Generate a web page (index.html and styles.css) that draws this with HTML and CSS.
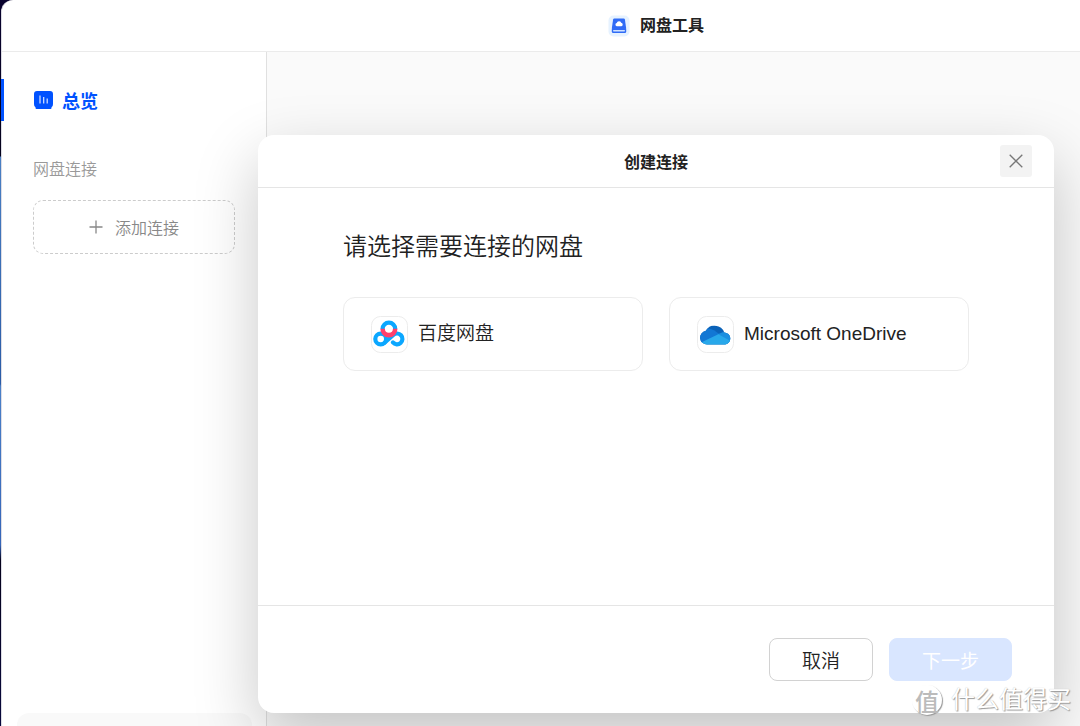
FILE: index.html
```html
<!DOCTYPE html>
<html lang="zh-CN">
<head>
<meta charset="utf-8">
<title>网盘工具</title>
<link rel="stylesheet" href="styles.css">
</head>
<body>
<div class="window">
  <header class="titlebar">
    <svg class="app-icon" width="22" height="22" viewBox="0 0 22 22" aria-hidden="true">
      <rect x="0.5" y="0.5" width="21" height="21" rx="5" fill="#e6f2ff"/>
      <path d="M6.300 3.500h9.400q1 0 1.200 1l1.300 9H3.800l1.300-9q.2-1 1.200-1z" fill="#2f6bf6"/>
      <rect x="3.800" y="12.500" width="14.400" height="5.500" rx="1.500" fill="#2f6bf6"/>
      <rect x="5" y="15" width="12" height="1.500" rx=".7" fill="#cfe2ff"/>
      <path d="M8.800 11.300a1.700 1.700 0 0 1-.1-3.300 2.400 2.400 0 0 1 4.500-.2 1.800 1.800 0 0 1 .2 3.500z" fill="#fff"/>
    </svg>
    <h1 class="app-name">网盘工具</h1>
  </header>
  <div class="workspace">
    <aside class="sidebar">
      <a class="nav-item" href="#overview">
        <svg width="19" height="18" viewBox="0 0 19 18" aria-hidden="true">
          <path d="M3 0h13q3 0 3 3v10q0 3-1.500 3.200V17q0 1-1 1h-14q-1 0-1-1v-.8Q0 16 0 13V3q0-3 3-3z" fill="#0052ff"/>
          <path d="M6 4.500v8M9.700 6v6.500M13.200 7.500v5" stroke="#dbe7ff" stroke-width="1.200"/>
        </svg>
        <span>总览</span>
      </a>
      <h2 class="group-title">网盘连接</h2>
      <button class="add-button" type="button">
        <svg width="14" height="14" viewBox="0 0 14 14" aria-hidden="true">
          <path d="M7 0.500v13M0.500 7h13" stroke="#888" stroke-width="1.300"/>
        </svg>
        <span>添加连接</span>
      </button>
      <div class="sidebar-panel"></div>
    </aside>
    <main class="content"></main>
  </div>
</div>

<div class="overlay">
  <section class="dialog" role="dialog" aria-labelledby="dialog-title">
    <header class="dialog-header">
      <h2 class="dialog-title" id="dialog-title">创建连接</h2>
      <button class="close-button" type="button" aria-label="关闭">
        <svg width="14" height="14" viewBox="0 0 14 14" aria-hidden="true">
          <path d="M0.700 0.700l12.600 12.600M13.300 0.700L0.700 13.300" stroke="#777" stroke-width="1.300"/>
        </svg>
      </button>
    </header>
    <div class="dialog-body">
      <h3 class="prompt">请选择需要连接的网盘</h3>
      <div class="options">
        <button class="option" type="button">
          <svg width="37" height="37" viewBox="0 0 37 37" aria-hidden="true">
            <rect x="0.500" y="0.500" width="36" height="36" rx="9" fill="#fff" stroke="#ececec"/>
            <g fill="none" stroke-width="4.200">
              <circle cx="9.700" cy="23" r="5.400" stroke="#0ba7ff"/>
              <path d="M13.500 26.800L22.300 19A5.400 5.400 0 1 1 21.900 26.400" stroke="#0ba7ff" stroke-linejoin="round" stroke-linecap="round"/>
              <path d="M11.600 13a6.300 6.300 0 0 1 12.600 0" stroke="#0ba7ff"/>
              <path d="M11.600 12.800a6.300 6.300 0 0 0 12.600 0" stroke="#ff3f6c" stroke-width="4.600"/>
            </g>
          </svg>
          <span>百度网盘</span>
        </button>
        <button class="option" type="button">
          <svg width="37" height="37" viewBox="0 0 37 37" aria-hidden="true">
            <defs>
              <clipPath id="cloud">
                <path d="M10 29a6.900 6.900 0 0 1-1.200-13.700A10.200 10.200 0 0 1 27.300 16.900a6.100 6.100 0 0 1 1 12.100z"/>
              </clipPath>
            </defs>
            <rect x="0.500" y="0.500" width="36" height="36" rx="9" fill="#fff" stroke="#ececec"/>
            <g clip-path="url(#cloud)" transform="translate(0 -0.500)">
              <rect width="37" height="37" fill="#0b62b8"/>
              <path d="M0 13h11q3 0 6 1.800L23 19 3 29z" fill="#1277d4"/>
              <path d="M21.300 18.500Q25 16 31 16l6 1v14L20 20z" fill="#1b8fe0"/>
              <path d="M2 28L21.300 18.800 37 27.500V37H2z" fill="#28a8ea"/>
            </g>
          </svg>
          <span>Microsoft OneDrive</span>
        </button>
      </div>
    </div>
    <footer class="dialog-footer">
      <button class="button" type="button">取消</button>
      <button class="button button-primary" type="button" disabled>下一步</button>
    </footer>
  </section>
</div>

<div class="watermark">
  <span class="watermark-badge">值</span>
  <span>什么值得买</span>
</div>
</body>
</html>
```
FILE: styles.css
```css
* {
  box-sizing: border-box;
}

body {
  margin: 0;
  min-height: 100vh;
  display: flex;
  position: relative;
  overflow: hidden;
  font-family: "Liberation Sans", "Noto Sans CJK SC", sans-serif;
  color: #222;
  background: linear-gradient(#08022e 0, #05021c 156px, #4a80c4 157px, #2a5ba6 384px, #4a80c8 386px, #3565b8 545px, #05021c 560px, #08083c 100%);
}

h1, h2, h3 {
  margin: 0;
}

button {
  font-family: inherit;
  font-weight: 350;
  color: inherit;
  margin: 0;
}

svg {
  display: block;
  flex: none;
}

.window {
  flex: 1;
  margin-left: 1px;
  display: flex;
  flex-direction: column;
  background: #fff;
  border-left: 1px solid #dcdce4;
  border-top-left-radius: 12px;
}

.titlebar {
  height: 52px;
  display: flex;
  align-items: center;
  justify-content: center;
  gap: 10px;
  padding-left: 230px;
  border-bottom: 1px solid #ebebeb;
}

.app-name,
.dialog-title {
  font-size: 16px;
  line-height: 24px;
  font-weight: 700;
}

.workspace {
  flex: 1;
  display: flex;
}

.sidebar {
  width: 265px;
  display: flex;
  flex-direction: column;
  padding-top: 27px;
  border-right: 1px solid #e0e0e0;
}

.nav-item {
  height: 42px;
  margin-left: -1px;
  display: flex;
  align-items: center;
  gap: 9px;
  padding-left: 30px;
  border-left: 3px solid #0052ff;
  color: #0052ff;
  font-size: 18px;
  font-weight: 700;
  text-decoration: none;
}

.group-title {
  margin: 37px 31px 0;
  font-size: 16px;
  line-height: 24px;
  font-weight: 350;
  color: #999;
}

.add-button {
  height: 54px;
  margin: 18px 31px 0 31px;
  display: flex;
  align-items: center;
  justify-content: center;
  gap: 12px;
  border: 1px dashed #ccc;
  border-radius: 10px;
  background: none;
  font-size: 16px;
  color: #888;
}

.sidebar-panel {
  height: 13px;
  margin: auto 14px 0 15px;
  border-radius: 12px 12px 0 0;
  background: #f9f9f9;
}

.content {
  flex: 1;
  background: #fafafa;
}

.overlay {
  position: absolute;
  inset: 0;
  display: flex;
  padding: 135px 26px 13px 258px;
}

.dialog {
  flex: 1;
  display: flex;
  flex-direction: column;
  background: #fff;
  border-radius: 16px;
  box-shadow: 0 24px 64px rgba(0, 0, 0, 0.22);
}

.dialog-header {
  height: 53px;
  display: grid;
  grid-template-columns: 1fr auto 1fr;
  align-items: center;
  padding: 0 22px;
  border-bottom: 1px solid #e5e5e5;
}

.dialog-title {
  grid-column: 2;
  padding-top: 3px;
}

.close-button {
  width: 32px;
  height: 32px;
  justify-self: end;
  display: grid;
  place-items: center;
  padding: 0;
  border: 0;
  border-radius: 3px;
  background: #f3f3f3;
}

.dialog-body {
  flex: 1;
  padding: 41px 85px;
}

.prompt {
  font-size: 24px;
  line-height: 36px;
  font-weight: 350;
}

.options {
  display: grid;
  grid-template-columns: 1fr 1fr;
  gap: 26px;
  margin-top: 32px;
}

.option {
  height: 74px;
  display: flex;
  align-items: center;
  gap: 10px;
  padding: 0 27px;
  border: 1px solid #ececec;
  border-radius: 12px;
  background: #fff;
  font-size: 19px;
  line-height: 28px;
}

.dialog-footer {
  display: flex;
  justify-content: flex-end;
  gap: 16px;
  padding: 32px 42px;
  border-top: 1px solid #e5e5e5;
}

.button {
  height: 43px;
  padding: 0 32px;
  border: 1px solid #d2d2d2;
  border-radius: 8px;
  background: #fff;
  font-size: 19px;
}

.button-primary {
  border-color: #d9e6ff;
  background: #d9e6ff;
  color: #fff;
  font-weight: 400;
}

.watermark {
  position: absolute;
  right: 9px;
  bottom: 8px;
  display: flex;
  align-items: center;
  gap: 9px;
  font-size: 24px;
  line-height: 36px;
  color: #fff;
  text-shadow: 1px 1px 1px #999, 0 0 1px #bbb;
}

.watermark-badge {
  width: 30px;
  height: 30px;
  display: grid;
  place-items: center;
  border-radius: 50%;
  background: #fff;
  box-shadow: 1px 1px 1px #999;
  color: #bbb;
  text-shadow: none;
  font-weight: 500;
}
```
